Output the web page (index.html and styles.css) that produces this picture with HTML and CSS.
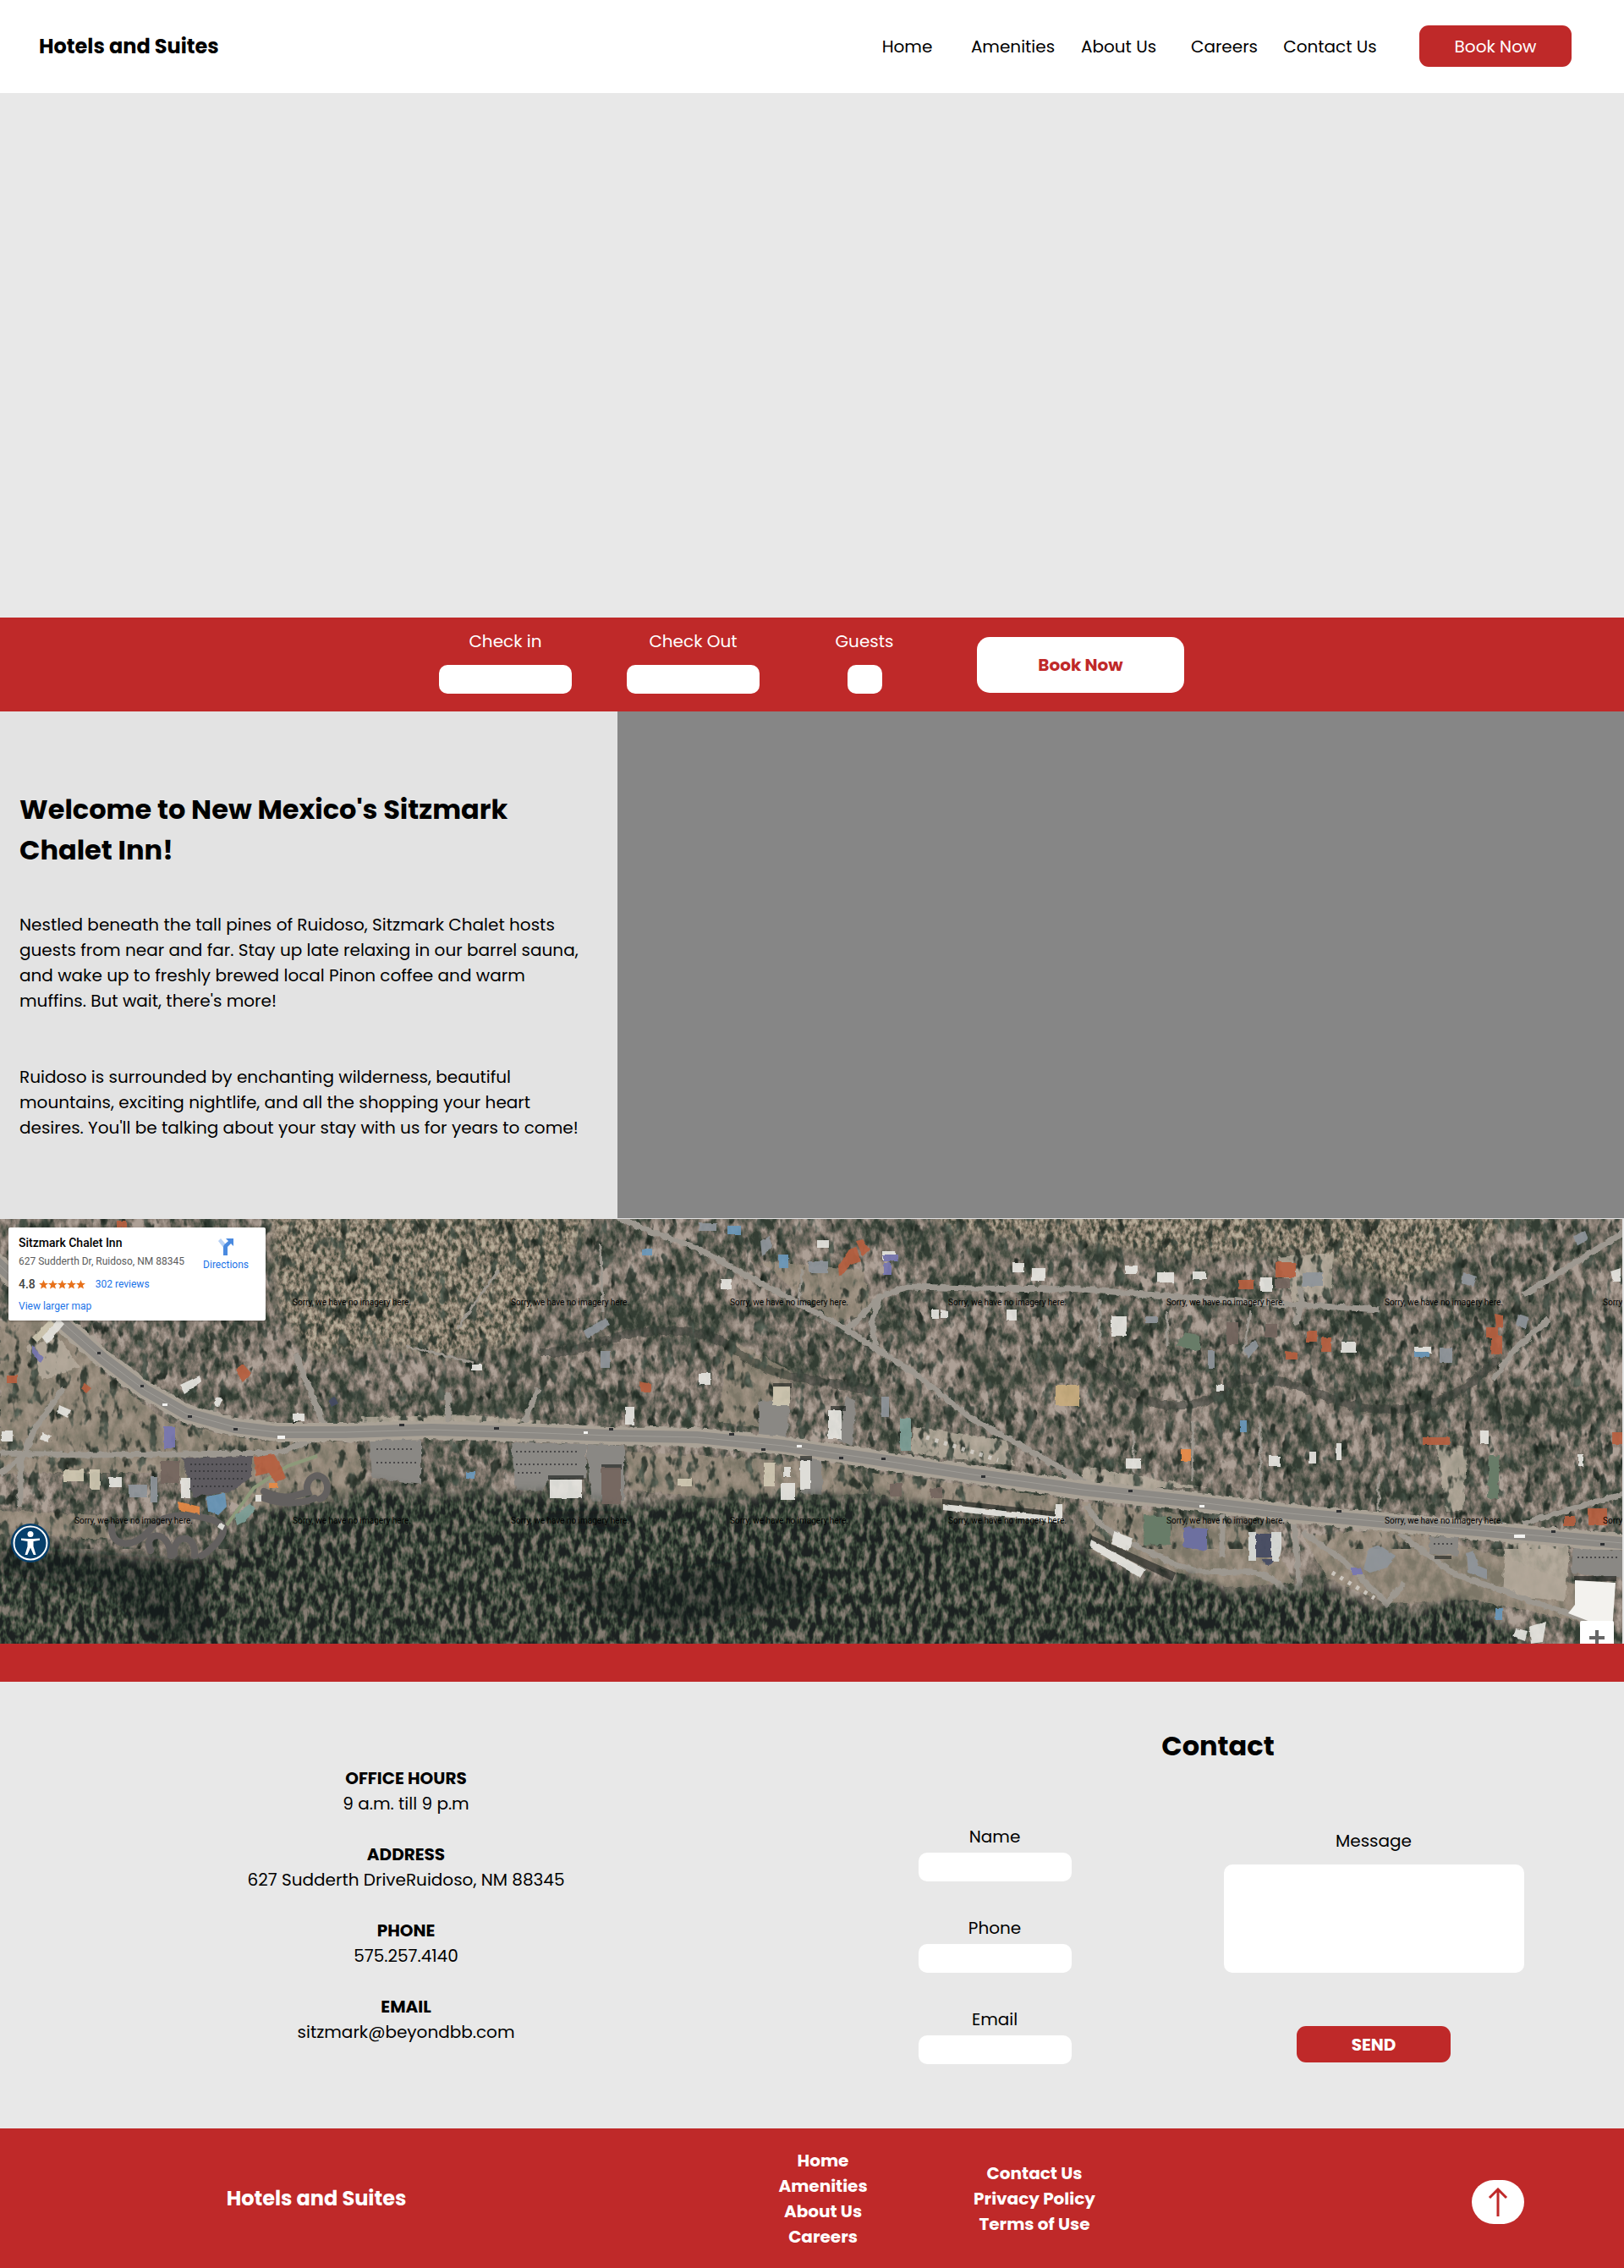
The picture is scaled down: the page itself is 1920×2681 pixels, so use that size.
FILE: index.html
```html
<!DOCTYPE html>
<html lang="en">
<head>
<meta charset="utf-8">
<meta name="viewport" content="width=device-width, initial-scale=1">
<title>Hotels and Suites</title>
<link rel="stylesheet" href="styles.css">
</head>
<body>
<header class="site-header">
  <a class="brand" href="#">Hotels and Suites</a>
  <nav class="main-nav">
    <a href="#">Home</a>
    <a href="#">Amenities</a>
    <a href="#">About Us</a>
    <a href="#">Careers</a>
    <a href="#contact">Contact Us</a>
  </nav>
  <button class="btn btn-header" type="button">Book Now</button>
</header>

<main>
  <section class="hero" aria-label="Hotel photo"></section>

  <form class="booking">
    <div class="booking-fields">
      <div class="booking-field"><label for="check-in">Check in</label><input id="check-in" class="field" type="text"></div>
      <div class="booking-field"><label for="check-out">Check Out</label><input id="check-out" class="field" type="text"></div>
      <div class="booking-field booking-guests"><label for="guests">Guests</label><input id="guests" class="field" type="text"></div>
    </div>
    <button class="btn btn-booking" type="button">Book Now</button>
  </form>

  <section class="welcome">
    <div class="welcome-text">
      <h1>Welcome to New Mexico's Sitzmark<br>Chalet Inn!</h1>
      <p>Nestled beneath the tall pines of Ruidoso, Sitzmark Chalet hosts<br>guests from near and far. Stay up late relaxing in our barrel sauna,<br>and wake up to freshly brewed local Pinon coffee and warm<br>muffins. But wait, there's more!</p>
      <p>Ruidoso is surrounded by enchanting wilderness, beautiful<br>mountains, exciting nightlife, and all the shopping your heart<br>desires. You'll be talking about your stay with us for years to come!</p>
    </div>
    <div class="welcome-photo"></div>
  </section>

  <section class="map" aria-label="Map">
    <svg class="map-image" viewBox="0 0 1920 502" preserveAspectRatio="xMinYMin slice" aria-hidden="true">
      <defs>
        <!-- mixed woods and yards -->
        <filter id="woods" x="0" y="0" width="100%" height="100%" color-interpolation-filters="sRGB">
          <feTurbulence type="fractalNoise" baseFrequency="0.1 0.06" numOctaves="4" seed="7" result="fine"/>
          <feTurbulence type="fractalNoise" baseFrequency="0.014 0.02" numOctaves="2" seed="3" result="wide"/>
          <feComposite in="fine" in2="wide" operator="arithmetic" k2="0.65" k3="0.35"/>
          <feColorMatrix values="3 0 0 0 -1  3 0 0 0 -1  3 0 0 0 -1  0 0 0 0 1"/>
          <feComponentTransfer>
            <feFuncR type="table" tableValues="0.20 0.30 0.41 0.51 0.60 0.68"/>
            <feFuncG type="table" tableValues="0.24 0.33 0.40 0.47 0.55 0.63"/>
            <feFuncB type="table" tableValues="0.20 0.28 0.36 0.43 0.51 0.59"/>
          </feComponentTransfer>
        </filter>
        <!-- dense pine forest -->
        <filter id="forest" x="0" y="0" width="100%" height="100%" color-interpolation-filters="sRGB">
          <feTurbulence type="fractalNoise" baseFrequency="0.14 0.07" numOctaves="3" seed="12"/>
          <feColorMatrix values="2.5 0 0 0 -0.85  2.5 0 0 0 -0.85  2.5 0 0 0 -0.85  0 0 0 0 1"/>
          <feComponentTransfer>
            <feFuncR type="table" tableValues="0.11 0.15 0.22 0.32 0.43 0.52"/>
            <feFuncG type="table" tableValues="0.13 0.18 0.28 0.35 0.41 0.49"/>
            <feFuncB type="table" tableValues="0.13 0.16 0.22 0.30 0.37 0.45"/>
          </feComponentTransfer>
        </filter>
        <!-- dry hillside -->
        <filter id="slope" x="0" y="0" width="100%" height="100%" color-interpolation-filters="sRGB">
          <feTurbulence type="fractalNoise" baseFrequency="0.2 0.13" numOctaves="3" seed="21"/>
          <feColorMatrix values="2.4 0 0 0 -0.7  2.4 0 0 0 -0.7  2.4 0 0 0 -0.7  0 0 0 0 1"/>
          <feComponentTransfer>
            <feFuncR type="table" tableValues="0.26 0.38 0.50 0.58 0.66 0.72"/>
            <feFuncG type="table" tableValues="0.29 0.38 0.46 0.53 0.61 0.68"/>
            <feFuncB type="table" tableValues="0.23 0.32 0.40 0.46 0.54 0.60"/>
          </feComponentTransfer>
        </filter>
        <!-- single tree crowns over lots and lanes -->
        <filter id="crowns" x="0" y="0" width="100%" height="100%" color-interpolation-filters="sRGB">
          <feTurbulence type="fractalNoise" baseFrequency="0.085 0.05" numOctaves="3" seed="33"/>
          <feColorMatrix values="0 0.4 0 0 0  0 0.43 0 0 0.03  0 0.4 0 0 0.01  7 0 0 0 -3.8"/>
        </filter>
        <filter id="soft" x="-5%" y="-5%" width="110%" height="110%"><feGaussianBlur stdDeviation="6"/></filter>
        <filter id="rough" x="-2%" y="-2%" width="104%" height="104%">
          <feTurbulence type="fractalNoise" baseFrequency="0.12" numOctaves="2" seed="5"/>
          <feDisplacementMap in="SourceGraphic" scale="6" xChannelSelector="R" yChannelSelector="G"/>
        </filter>
        <filter id="worn" x="-2%" y="-2%" width="104%" height="104%">
          <feTurbulence type="fractalNoise" baseFrequency="0.12" numOctaves="2" seed="5"/>
          <feDisplacementMap in="SourceGraphic" scale="3" xChannelSelector="R" yChannelSelector="G"/>
        </filter>
        <mask id="forest-mask"><path fill="#fff" filter="url(#soft)" d="M-20 378L80 384L130 402L245 402L302 374L312 342L392 336L433 312L502 326L640 324L738 338L844 332L917 327L1032 328L1113 339L1121 352L1260 356L1280 392L1361 436L1410 420L1451 442L1525 438L1565 432L1631 462L1668 468L1721 446L1770 476L1830 520H-20Z"/></mask>
        <mask id="slope-mask"><path fill="#fff" filter="url(#soft)" d="M318-20H640L700 0L640 100L610 150L520 165L450 150L370 165L330 110ZM1090-20H1810L1750 30L1660 80L1600 60L1540 40L1400 45L1280 30L1120 15Z"/></mask>
      </defs>

      <rect width="1920" height="502" filter="url(#woods)"/>
      <g mask="url(#slope-mask)"><rect width="1920" height="200" filter="url(#slope)"/></g>

      <!-- bare ground, lots and creek beds -->
      <g filter="url(#rough)">
        <path fill="#9c907f" opacity=".7" d="M0 120L60 112L130 190L200 240L300 262L420 264L440 330L300 345L190 300L0 300ZM0 345L120 350L130 378L0 372ZM740 275L1000 290L1030 325L840 330L745 320ZM860 140L935 180L930 250L850 240ZM900 50L1020 60L1030 110L990 122L945 90ZM1030 300L1260 330L1256 352L1120 344L1035 326ZM1280 335L1400 350L1500 370L1530 430L1450 436L1380 415L1290 400ZM1540 375L1650 365L1780 400L1880 440L1890 480L1740 450L1640 455L1570 425Z"/>
        <path fill="#b8ae9f" opacity=".8" d="M428 234L560 232L640 238V250H428ZM1080 245L1190 262L1200 292L1075 277ZM1510 45L1576 40L1574 90L1530 98ZM1780 378L1856 384L1850 452L1776 444ZM1280 292L1350 305L1430 318H1280ZM30 150L70 140L95 175L50 190ZM1698 265L1735 270L1730 345L1710 345Z"/>
        <path fill="none" stroke="#343d33" stroke-width="10" opacity=".55" d="M640 158C700 160 720 130 790 132S860 155 900 174S980 190 1040 205M1280 165C1330 190 1340 225 1400 220S1440 180 1500 190S1570 220 1630 225S1740 200 1770 165"/>
      </g>

      <rect width="1920" height="390" filter="url(#crowns)" opacity=".85"/>

      <g filter="url(#rough)">
        <!-- side roads -->
        <g fill="none" stroke="#9d9890" stroke-width="7" stroke-linejoin="round">
          <path d="M730-2L770 15L824 34L870 60L995 127L1032 151L1081 182L1150 237L1220 275L1284 312"/>
          <path d="M1003 130L1040 92L1073 80L1150 82L1280 83L1378 91L1508 100L1631 107M1040 92L1030 125L1036 150"/>
          <path d="M1920 15L1851 59L1800 90M1831 118L1790 155L1765 190"/>
          <path d="M0 277L100 279L220 278L330 276L375 258M0 302L30 278M24 340V290L40 250L75 200"/>
          <path d="M1284 338C1300 370 1340 385 1390 408S1480 400 1515 435S1530 400 1530 350M1445 350V400M1655 372L1720 420L1820 455L1880 475"/>
          <path d="M1540 370L1590 405L1640 455L1660 430M1920 325L1850 345L1800 360M1538 80V100L1532 125M350 160L385 250M530 205V240M636 200L620 240"/>
          <path stroke-width="3" d="M1478 110L1470 160M1300 95V150M590 60L540 130M480 150L560 170M710 30L712 110M948 60L945 100M1380 110V150M1630 300V345M1490 240V330M1340 250V300M1410 240V310"/>
        </g>
        <!-- parking lots, courts -->
        <path fill="#5d5a5e" d="M215 282L298 280V305L272 323L228 328Z"/>
        <path fill="#8a8884" d="M437 262L498 260V313L440 306ZM604 264L693 266V306L650 307L640 322L610 320ZM693 266L738 268V333L700 334ZM897 215L934 217L930 262L896 255ZM946 277L972 284V326L946 324ZM1000 210L1012 215L1008 268L992 262ZM1690 375L1724 376V398L1690 395ZM1860 385L1920 392V425L1858 418Z"/>
        <path fill="#687b68" d="M1353 350L1384 352V386L1352 384ZM1761 280H1772V330H1759ZM1400 135L1418 138V155L1390 150Z"/>
        <path fill="#6d6fa0" d="M1399 364L1428 366V392L1399 388Z"/>
      </g>
      <path fill="none" stroke="#2d2d30" stroke-width="2" stroke-dasharray="2 3" opacity=".7" d="M225 290H292M225 298H292M225 307H290M228 316H275M445 272H490M445 288H492M610 275H685M610 290H685M612 300H640M1695 384H1720M1865 400H1915"/>

      <g mask="url(#forest-mask)"><rect y="290" width="1920" height="212" filter="url(#forest)"/></g>
      <path fill="#111713" opacity=".4" filter="url(#soft)" d="M0 390L100 395L240 405L250 500H190L120 440L0 420ZM640 345L738 345L740 365L640 360ZM640 440L900 400L1000 440L800 490Z"/>

      <!-- go-kart track -->
      <path fill="none" stroke="#63605f" stroke-width="8" stroke-linecap="round" d="M312 322C340 335 350 325 364 323A12 14 0 1 1 378 331M312 330C340 340 360 335 372 330M132 362C130 390 160 390 178 366S245 350 260 360S245 395 238 398M178 392C168 370 200 365 202 398M206 396C204 372 232 370 230 398"/>
      <path fill="none" stroke="#8d9a7a" stroke-width="4" d="M268 362L300 318L340 292L375 280"/>

      <!-- Sudderth Drive -->
      <path fill="none" stroke="#aaa296" stroke-width="22" filter="url(#rough)" d="M-10 46L73 122L122 165L171 202L220 230L278 246L327 252L408 252L510 249L640 253L722 256L824 258L926 268L1028 283L1150 302L1280 320L1402 333L1525 348L1647 359L1770 370L1930 384"/>
      <path fill="none" stroke="#8d8a85" stroke-width="14" d="M-10 46L73 122L122 165L171 202L220 230L278 246L327 252L408 252L510 249L640 253L722 256L824 258L926 268L1028 283L1150 302L1280 320L1402 333L1525 348L1647 359L1770 370L1930 384"/>
      <path fill="none" stroke="#a09d97" stroke-width="1" d="M-10 46L73 122L122 165L171 202L220 230L278 246L327 252L408 252L510 249L640 253L722 256L824 258L926 268L1028 283L1150 302L1280 320L1402 333L1525 348L1647 359L1770 370L1930 384"/>
      <path fill="#2e3033" d="M115 157h4v3h-4zM166 196h4v3h-4zM222 232h5v3h-5zM276 247h5v3h-5zM472 242h6v3h-6zM584 246h6v3h-6zM720 247h5v3h-5zM862 253h6v3h-6zM900 271h5v3h-5zM992 281h5v3h-5zM1042 282h5v3h-5zM1160 303h5v3h-5zM1334 320h5v3h-5zM1580 344h6v3h-6zM1834 368h5v3h-5zM1892 383h5v3h-5z"/>
      <path fill="#f2f2f0" d="M192 218h6v3h-6zM328 256h9v4h-9zM690 251h5v3h-5zM942 267h6v3h-6zM1418 338h6v3h-6zM1790 373h13v4h-13z"/>

      <!-- building shadows -->
      <path fill="#1f2320" opacity=".65" d="M982 221h18v6h-18zM914 194h22v6h-22zM648 303h42v5h-42zM711 290h24v6h-24zM946 280h14v6h-14zM1114 331L1250 346L1250 352L1114 337ZM1290 374L1390 418L1386 428L1288 380ZM1861 422h50v6h-50zM1696 398h20v4h-20z"/>
      <g filter="url(#worn)" opacity=".92">
        <!-- white and cream roofs -->
        <path fill="#e6e5e0" d="M979 226h16v34h-16zM946 286h12v34h-12zM650 308h38v22h-38zM1115 337L1250 352V359L1115 344ZM1248 337h8v20h-8zM1290 379L1354 414L1348 424L1288 388ZM1317 369L1340 378L1334 392L1314 384ZM1314 115h18v23h-18zM1368 63h20v12h-20zM1490 69h14v17h-14zM1586 145h17v13h-17zM1410 62h16v9h-16zM1330 55h15v10h-15zM1197 52h14v11h-14zM1219 58h17v15h-17zM826 182h14v14h-14zM739 222h11v21h-11zM1043 38h16v10h-16zM966 25h14v9h-14zM852 71h13v12h-13zM927 293h7v12h-7zM923 312h17v20h-17zM1672 151h20v8h-20zM1438 196h9v8h-9zM129 305h15v12h-15zM214 306h11v24h-11zM48 138L70 118L76 124L56 148ZM213 196L236 185L238 193L218 206ZM255 211l8 2l-4 9l-6-4zM346 230h14v9h-14zM2 250h13v13h-13zM302 326h7v8h-7zM558 172h12v7h-12zM1331 283h18v12h-18zM1500 280h14v12h-14zM1808 482L1828 476L1824 500L1810 502ZM1792 484l14 3l-3 12l-14-5zM1904 62l12-4v16h-9zM1101 107h9v11h-9zM1190 107h12v13h-12zM1112 107l9 2v8h-9zM260 359l6 3l-3 6l-6-4zM70 220l14 6l-4 9l-12-6zM50 252l10 4l-3 8l-10-4zM1866 278h6v14h-6zM1548 275h8v14h-8zM1580 265h6v20h-6zM1750 250h10v16h-10z"/>
        <path fill="#d0c8b2" d="M914 198h20v22h-20zM38 140L60 118L64 124L44 146ZM106 296h12v24h-12zM75 296h24v14h-24zM801 307h17v9h-17zM903 288h13v28h-13z"/>
        <path fill="#c9ad7e" d="M1248 196h28v25h-28z"/>
        <!-- grey and slate roofs -->
        <path fill="#8f959b" d="M690 132L716 117L721 125L694 142ZM956 50h23v14h-23zM1540 63h24v16h-24zM1354 115h14v8h-14zM1730 63L1746 68L1742 80L1728 76ZM1702 152h15v18h-15zM1860 20l14-6l4 10l-14 8zM1795 112l12 4l-3 14l-12-5zM1428 155h8v22h-8zM1470 155l14-12l4 6l-12 16zM1618 390L1630 385L1650 398L1640 412L1620 418L1612 414ZM1734 395L1742 392L1748 410L1758 414V426L1736 418ZM152 314h22v15h-22zM178 305h8v30h-8zM827 5h20v9h-20zM899 26l10-6l4 12l-12 12zM1042 210h9v24h-9zM710 156h11v20h-11z"/>
        <path fill="#75665f" d="M711 294h23v43h-23zM190 286h22v26h-22zM1450 122h14v26h-14zM1496 124h14v16h-14zM1052 312h14v16h-14zM1100 318h14v12h-14zM1507 70h18v12h-18z"/>
        <path fill="#454c63" d="M1485 372h18v28h-18zM1492 402a7 7 0 1 0 14 0zM388 214l8-3l4 7l-8 4z"/>
        <path fill="#d8dbd8" d="M1476 370h9v34h-9zM1503 370h12v20l-3 14h-9z"/>
        <!-- terracotta roofs -->
        <path fill="#b8603f" d="M278 178L287 171L297 182L287 193ZM991 55L1004 36L1012 33L1018 50L1006 54L992 68ZM1012 26L1020 24L1028 36L1020 44ZM1508 51h24v18h-24zM1464 72h18v11h-18zM1763 138h13v22h-13zM1757 128h14v12h-14zM1767 112l10 2v14h-8zM1545 132h12v13h-12zM1520 156l14 2v8h-14zM1562 140h12v17h-12zM1878 342h22v20h-22zM1849 351h13v12h-13zM1682 258h32v9h-32zM1906 252h14v14h-14zM300 282L324 278L332 292L338 306L326 312L318 300L302 304ZM138 2h12v8h-12zM100 194l8 6l-6 6l-6-5zM8 185h12v9h-12zM756 192l14 3v9h-12z"/>
        <path fill="#e88a45" d="M211 334L236 340V349L212 344ZM318 312h10v6h-10zM1396 272h12v14h-12z"/>
        <!-- blue roofs and pools -->
        <path fill="#6a98bb" d="M244 328L266 324L268 340L258 350L246 345ZM1672 157h18v6h-18zM860 8h16v10h-16zM921 42h11v16h-11zM759 35h12v8h-12zM1466 238h8v14h-8zM1768 460h8v14h-8zM551 299h11v8h-11z"/>
        <path fill="#7877b2" d="M194 245h13v26h-13zM38 150l14 14l-4 6l-10-12zM1044 42h18v8h-18zM1598 412h12v9h-12zM1045 52h9v14h-9z"/>
        <path fill="#7d9f97" d="M278 350L296 336L302 342L290 358L280 362ZM1064 236h13v38h-13z"/>
      </g>
      <path fill="#f3f2ee" d="M1862 427L1910 430L1906 486L1854 466L1862 456Z"/>
      <path fill="none" stroke="#d9d6cf" stroke-width="5" stroke-dasharray="4 7" opacity=".8" d="M1095 258L1180 285M1575 418L1625 448"/>

      <g class="map-notice">
        <text x="346" y="102">Sorry, we have no imagery here.</text>
        <text x="604" y="102">Sorry, we have no imagery here.</text>
        <text x="863" y="102">Sorry, we have no imagery here.</text>
        <text x="1121" y="102">Sorry, we have no imagery here.</text>
        <text x="1379" y="102">Sorry, we have no imagery here.</text>
        <text x="1637" y="102">Sorry, we have no imagery here.</text>
        <text x="1895" y="102">Sorry</text>
        <text x="88" y="360">Sorry, we have no imagery here.</text>
        <text x="346" y="360">Sorry, we have no imagery here.</text>
        <text x="604" y="360">Sorry, we have no imagery here.</text>
        <text x="863" y="360">Sorry, we have no imagery here.</text>
        <text x="1121" y="360">Sorry, we have no imagery here.</text>
        <text x="1379" y="360">Sorry, we have no imagery here.</text>
        <text x="1637" y="360">Sorry, we have no imagery here.</text>
        <text x="1895" y="360">Sorry</text>
      </g>
    </svg>

    <div class="map-card">
      <div class="map-place">
        <strong class="map-title">Sitzmark Chalet Inn</strong>
        <span class="map-address">627 Sudderth Dr, Ruidoso, NM 88345</span>
        <span class="map-rating"><b>4.8</b>
          <svg width="55" height="11" viewBox="0 0 55 11" fill="#e7711b" role="img" aria-label="Five stars">
            <path d="M5.500 0L7 3.800L11 4L7.900 6.600L9 10.600L5.500 8.400L2 10.600L3.100 6.600L0 4L4 3.800Z"/>
            <path transform="translate(11)" d="M5.500 0L7 3.800L11 4L7.900 6.600L9 10.600L5.500 8.400L2 10.600L3.100 6.600L0 4L4 3.800Z"/>
            <path transform="translate(22)" d="M5.500 0L7 3.800L11 4L7.900 6.600L9 10.600L5.500 8.400L2 10.600L3.100 6.600L0 4L4 3.800Z"/>
            <path transform="translate(33)" d="M5.500 0L7 3.800L11 4L7.900 6.600L9 10.600L5.500 8.400L2 10.600L3.100 6.600L0 4L4 3.800Z"/>
            <path transform="translate(44)" d="M5.500 0L7 3.800L11 4L7.900 6.600L9 10.600L5.500 8.400L2 10.600L3.100 6.600L0 4L4 3.800Z"/>
          </svg>
          <a href="#">302 reviews</a></span>
        <a class="map-larger" href="#">View larger map</a>
      </div>
      <a class="map-directions" href="#">
        <svg width="20" height="20" viewBox="0 0 20 20" aria-hidden="true">
          <path fill="#b7d1f5" d="M1 3L4 0L10 7L8 12Z"/>
          <path fill="#4a8ae0" d="M10 0H19V9L16 6L12 10V20H7V10Q7 8 9 6.500L13 3Z"/>
        </svg>
        Directions
      </a>
    </div>

    <button class="map-access" type="button" aria-label="Accessibility options">
      <svg width="46" height="46" viewBox="0 0 46 46" aria-hidden="true">
        <circle cx="23" cy="23" r="23" fill="#063f6b"/>
        <circle cx="23" cy="23" r="19.500" fill="none" stroke="#fff" stroke-width="2"/>
        <circle cx="23" cy="12.500" r="3.500" fill="#fff"/>
        <path fill="#fff" d="M12 17.500L20 18H26L34 17.500V19.700L26.500 21V27L29.500 37H26.700L23 28.500L19.300 37H16.500L19.500 27V21L12 19.700Z"/>
      </svg>
    </button>
    <button class="map-zoom" type="button" aria-label="Zoom in">
      <svg width="18" height="18" viewBox="0 0 18 18" aria-hidden="true"><path fill="#666" d="M7 0H11V7H18V11H11V18H7V11H0V7H7Z"/></svg>
    </button>
  </section>
  <div class="divider"></div>

  <section class="contact" id="contact">
    <dl class="office">
      <div><dt>OFFICE HOURS</dt><dd>9 a.m. till 9 p.m</dd></div>
      <div><dt>ADDRESS</dt><dd>627 Sudderth DriveRuidoso, NM 88345</dd></div>
      <div><dt>PHONE</dt><dd>575.257.4140</dd></div>
      <div><dt>EMAIL</dt><dd>sitzmark@beyondbb.com</dd></div>
    </dl>
    <div class="contact-panel">
      <h2>Contact</h2>
      <form class="contact-form">
        <div class="contact-fields">
          <div class="contact-field"><label for="name">Name</label><input id="name" class="field" type="text"></div>
          <div class="contact-field"><label for="phone">Phone</label><input id="phone" class="field" type="tel"></div>
          <div class="contact-field"><label for="email">Email</label><input id="email" class="field" type="email"></div>
        </div>
        <div class="contact-message">
          <label for="message">Message</label>
          <textarea id="message" class="field"></textarea>
          <button class="btn btn-send" type="button">SEND</button>
        </div>
      </form>
    </div>
  </section>
</main>

<footer class="site-footer">
  <a class="brand footer-brand" href="#">Hotels and Suites</a>
  <nav class="footer-links footer-main">
    <a href="#">Home</a>
    <a href="#">Amenities</a>
    <a href="#">About Us</a>
    <a href="#">Careers</a>
  </nav>
  <nav class="footer-links">
    <a href="#contact">Contact Us</a>
    <a href="#">Privacy Policy</a>
    <a href="#">Terms of Use</a>
  </nav>
  <a class="to-top" href="#" aria-label="Back to top">
    <svg width="24" height="34" viewBox="0 0 24 34" fill="none" stroke="#bf2929" stroke-width="3" aria-hidden="true"><path d="M12 34V2M2 12L12 2L22 12"/></svg>
  </a>
</footer>
</body>
</html>
```
FILE: styles.css
```css
:root {
  --red: #bf2929;
  --light: #e8e8e8;
}

* { box-sizing: border-box; }

body {
  margin: 0;
  background: var(--light);
  color: #000;
  font: 400 20px/30px Poppins, Inter, sans-serif;
}

a { color: inherit; text-decoration: none; }
h1, h2, p, dl, dd { margin: 0; }
h1, h2 { font-size: 32px; line-height: 48px; font-weight: 700; }

.btn {
  border: 0;
  padding: 0;
  border-radius: 11px;
  background: var(--red);
  color: #fff;
  font: inherit;
  cursor: pointer;
}

.field {
  display: block;
  width: 100%;
  height: 34px;
  padding: 0 10px;
  border: 0;
  border-radius: 10px;
  background: #fff;
  font: inherit;
  resize: none;
}

.brand { font-size: 24px; line-height: 36px; font-weight: 700; white-space: nowrap; }

/* Header */
.site-header {
  display: flex;
  align-items: center;
  min-height: 110px;
  padding: 0 62px 1px 46px;
  background: #fff;
}
.main-nav {
  display: grid;
  grid-template-columns: repeat(5, 125px);
  margin-left: auto;
  margin-right: 43px;
  text-align: center;
  white-space: nowrap;
}
.btn-header { width: 180px; height: 49px; }

.hero { height: 620px; }

/* Booking bar */
.booking {
  display: flex;
  justify-content: center;
  align-items: flex-start;
  gap: 74px;
  padding: 13px 1px 21px 0;
  background: var(--red);
  color: #fff;
}
.booking-fields { display: flex; gap: 65px; }
.booking-field {
  display: flex;
  flex-direction: column;
  align-items: center;
  gap: 13px;
  width: 157px;
}
.booking-guests { width: 118px; }
.booking-guests .field { width: 41px; }
.btn-booking {
  width: 245px;
  height: 66px;
  margin-top: 10px;
  border-radius: 15px;
  background: #fff;
  color: var(--red);
  font-weight: 700;
}

/* Welcome */
.welcome { display: grid; grid-template-columns: 38% 1fr; }
.welcome-text {
  padding: 92px 23px;
  background: #e3e3e3;
  white-space: nowrap;
}
.welcome-text h1 { margin-bottom: 49px; }
.welcome-text p + p { margin-top: 60px; }
.welcome-photo { background: #868686; }

/* Map */
.map {
  position: relative;
  height: 503px;
  border-top: 1px solid #e3e3e3;
  border-right: 2px solid #e3e3e3;
  overflow: hidden;
  font: 12px/16px Roboto, sans-serif;
}
.map-image { display: block; width: 100%; height: 100%; }
.map-notice { font: 10px Roboto, sans-serif; fill: #000; }
.map-card {
  position: absolute;
  top: 10px;
  left: 10px;
  display: flex;
  justify-content: space-between;
  width: 304px;
  height: 110px;
  padding: 9px 20px 9px 12px;
  border-radius: 2px;
  background: #fff;
  box-shadow: 0 1px 3px rgba(0, 0, 0, .3);
}
.map-card a { color: #1a73e8; }
.map-place { display: flex; flex-direction: column; white-space: nowrap; }
.map-title { font-size: 14px; line-height: 18px; font-weight: 500; }
.map-address { margin-top: 5px; color: #5b5b5b; }
.map-rating { display: flex; align-items: center; gap: 4px; margin-top: 11px; color: #444; }
.map-rating b { font-size: 14px; font-weight: 500; }
.map-rating a { margin-left: 8px; }
.map-larger { margin-top: 10px; }
.map-directions {
  display: flex;
  flex-direction: column;
  align-items: center;
  gap: 3px;
  padding-top: 4px;
}
.map-access {
  position: absolute;
  left: 13px;
  top: 360px;
  padding: 0;
  border: 0;
  background: none;
  line-height: 0;
}
.map-zoom {
  position: absolute;
  right: 10px;
  top: 475px;
  display: flex;
  justify-content: center;
  width: 40px;
  height: 40px;
  padding: 11px 0 0;
  border: 0;
  border-radius: 2px;
  background: #fff;
}

.divider { height: 45px; background: var(--red); }

/* Contact */
.contact {
  display: grid;
  grid-template-columns: 1fr 1fr;
  min-height: 528px;
}
.office {
  display: flex;
  flex-direction: column;
  justify-content: center;
  gap: 30px;
  text-align: center;
}
.office dt { font-weight: 700; }
.contact-panel { padding: 52px 0 74px; text-align: center; }
.contact-form {
  display: grid;
  grid-template-columns: 432fr 464fr;
  padding: 65px 64px 0 0;
}
.contact-fields {
  display: flex;
  flex-direction: column;
  align-items: center;
  gap: 40px;
  padding-top: 3px;
}
.contact-field { width: 181px; }
.contact-field label { display: block; margin-bottom: 4px; }
.contact-message {
  display: flex;
  flex-direction: column;
  align-items: center;
  padding-top: 8px;
}
.contact-message .field { width: 355px; height: 128px; margin: 13px 0 63px; }
.btn-send { width: 182px; height: 43px; font-weight: 700; }

/* Footer */
.site-footer {
  display: grid;
  grid-template-columns: 748fr 100fr 250fr 250fr 572fr;
  align-items: center;
  min-height: 165px;
  background: var(--red);
  color: #fff;
}
.footer-brand { justify-self: center; }
.footer-links {
  display: flex;
  flex-direction: column;
  align-items: center;
  font-weight: 700;
}
.footer-main { grid-column: 3; }
.to-top {
  display: flex;
  justify-content: center;
  align-items: center;
  justify-self: end;
  width: 62px;
  height: 52px;
  margin: 8px 118px 0 0;
  border-radius: 26px;
  background: #fff;
}
```
